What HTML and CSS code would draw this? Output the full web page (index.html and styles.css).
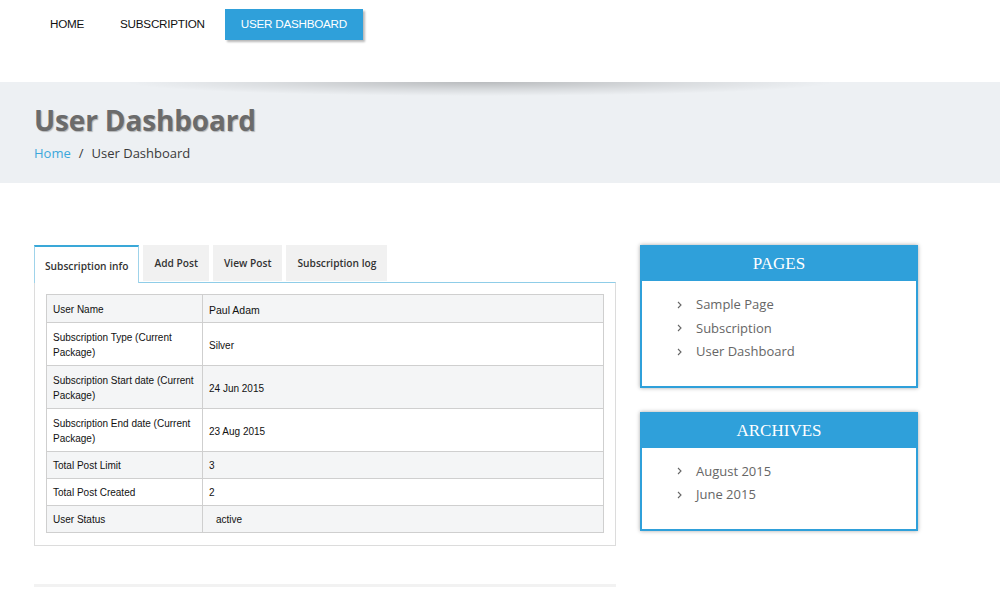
FILE: index.html
```html
<!DOCTYPE html>
<html>
<head>
<meta charset="utf-8">
<title>User Dashboard</title>
<link rel="stylesheet" href="styles.css">
</head>
<body>
<header class="topbar">
  <nav class="nav">
    <a class="nav-item" href="#">HOME</a>
    <a class="nav-item" href="#">SUBSCRIPTION</a>
    <a class="nav-item active" href="#">USER DASHBOARD</a>
  </nav>
</header>

<section class="banner">
  <h1 class="page-title">User Dashboard</h1>
  <div class="crumbs"><a href="#">Home</a><span class="sep">/</span><span>User Dashboard</span></div>
</section>

<main class="wrap">
  <div class="content">
    <div class="tabs">
      <div class="tab active">Subscription info</div>
      <div class="tab">Add Post</div>
      <div class="tab">View Post</div>
      <div class="tab">Subscription log</div>
    </div>
    <div class="tab-panel">
      <table class="info">
        <tr><th>User Name</th><td class="big">Paul Adam</td></tr>
        <tr class="two"><th>Subscription Type (Current Package)</th><td>Silver</td></tr>
        <tr class="two"><th>Subscription Start date (Current Package)</th><td>24 Jun 2015</td></tr>
        <tr class="two"><th>Subscription End date (Current Package)</th><td>23 Aug 2015</td></tr>
        <tr><th>Total Post Limit</th><td>3</td></tr>
        <tr><th>Total Post Created</th><td>2</td></tr>
        <tr><th>User Status</th><td class="indent">active</td></tr>
      </table>
    </div>
    <div class="footline"></div>
  </div>

  <aside class="sidebar">
    <div class="widget">
      <h3 class="widget-title">PAGES</h3>
      <ul class="widget-list">
        <li><svg class="chev" viewBox="0 0 5 8" width="5" height="8"><path d="M1 1 L4 4 L1 7" fill="none" stroke="#666" stroke-width="1.1"/></svg>Sample Page</li>
        <li><svg class="chev" viewBox="0 0 5 8" width="5" height="8"><path d="M1 1 L4 4 L1 7" fill="none" stroke="#666" stroke-width="1.1"/></svg>Subscription</li>
        <li><svg class="chev" viewBox="0 0 5 8" width="5" height="8"><path d="M1 1 L4 4 L1 7" fill="none" stroke="#666" stroke-width="1.1"/></svg>User Dashboard</li>
      </ul>
    </div>
    <div class="widget">
      <h3 class="widget-title">ARCHIVES</h3>
      <ul class="widget-list">
        <li><svg class="chev" viewBox="0 0 5 8" width="5" height="8"><path d="M1 1 L4 4 L1 7" fill="none" stroke="#666" stroke-width="1.1"/></svg>August 2015</li>
        <li><svg class="chev" viewBox="0 0 5 8" width="5" height="8"><path d="M1 1 L4 4 L1 7" fill="none" stroke="#666" stroke-width="1.1"/></svg>June 2015</li>
      </ul>
    </div>
  </aside>
</main>
</body>
</html>
```

FILE: styles.css
```css
* { box-sizing: border-box; }
html, body { margin: 0; padding: 0; background: #fff; }
body { font-family: "Open Sans", "Liberation Sans", sans-serif; color: #444; }
a { text-decoration: none; }

.topbar { height: 82px; padding: 9px 0 0 34px; }
.nav { display: flex; gap: 4px; }
.nav-item {
  font-family: "Liberation Sans", Arial, sans-serif;
  font-size: 11.7px;
  color: #111;
  height: 31px;
  line-height: 30px;
  padding: 0 16px;
  letter-spacing: -0.25px;
}
.nav-item.active {
  background: #2fa0da;
  color: #fff;
  box-shadow: 2px 2px 2px rgba(0,0,0,0.28);
}

.banner {
  position: relative;
  height: 101px;
  background: #edf0f3;
  padding: 19px 0 0 34px;
}
.banner::before {
  content: "";
  position: absolute;
  left: 125px;
  top: 0;
  width: 710px;
  height: 14px;
  background: radial-gradient(ellipse 50% 100% at 50% 0, rgba(0,0,0,0.22), rgba(0,0,0,0.08) 60%, rgba(0,0,0,0) 100%);
}
.page-title {
  margin: 0;
  font-family: "Open Sans", sans-serif;
  font-weight: 700;
  font-size: 28px;
  line-height: 38px;
  color: #6b6b6b;
  text-shadow: 1px 1px 1px rgba(0,0,0,0.25);
  letter-spacing: -0.15px;
}
.crumbs { margin-top: 4px; font-size: 13px; line-height: 20px; color: #3a3a3a; }
.crumbs a { color: #3ba7db; }
.crumbs .sep { margin: 0 8px; }

.wrap { display: flex; gap: 24px; padding: 62px 0 0 34px; }
.content { width: 582px; }

.tabs { display: flex; gap: 4px; align-items: flex-start; }
.tab {
  font-size: 10.2px;
  font-weight: 600;
  color: #333;
  background: #f1f1f1;
  height: 36px;
  line-height: 36px;
  padding: 0 11px;
}
.tab.active {
  background: #fff;
  height: 38px;
  line-height: 38px;
  border-top: 2px solid #3aa8d8;
  border-left: 1px solid #9fd3ea;
  border-right: 1px solid #9fd3ea;
  margin-bottom: -1px;
  position: relative;
  z-index: 1;
  padding: 0 10px;
}
.tab-panel {
  border: 1px solid #dcdcdc;
  border-top: 1px solid #8fcde8;
  padding: 11px 11px 12px;
}
.info {
  width: 100%;
  border-collapse: collapse;
  font-family: "Liberation Sans", Arial, sans-serif;
  font-size: 10px;
  color: #111;
}
.info th, .info td {
  border: 1px solid #cfcfcf;
  text-align: left;
  vertical-align: middle;
  line-height: 15px;
  padding: 6px 5px 5px 6px;
}
.info tr.two th, .info tr.two td { padding-top: 7px; padding-bottom: 5px; }
.info th { font-weight: normal; width: 156px; }
.info tr:nth-child(odd) { background: #f4f5f6; }
.info td.big { font-size: 10.5px; padding-top: 8px; padding-bottom: 4px; }
.info td.indent { padding-left: 13px; }

.footline { height: 3px; background: #f2f2f2; margin-top: 38px; }

.sidebar { width: 278px; display: flex; flex-direction: column; gap: 24px; }
.widget {
  border: 2px solid #2fa0da;
  background: #fff;
  box-shadow: 0 0 4px rgba(0,0,0,0.35);
}
.widget-title {
  margin: 0;
  background: #2fa0da;
  color: #fff;
  font-family: "Liberation Serif", "Times New Roman", serif;
  font-weight: normal;
  font-size: 17px;
  height: 34px;
  line-height: 34px;
  text-align: center;
}
.widget-list {
  list-style: none;
  margin: 0;
  padding: 12px 0 22px 35px;
}
.widget-list li {
  font-size: 13px;
  color: #666;
  line-height: 23.5px;
  display: flex;
  align-items: center;
}
.chev { margin-right: 14px; flex: none; }
```
